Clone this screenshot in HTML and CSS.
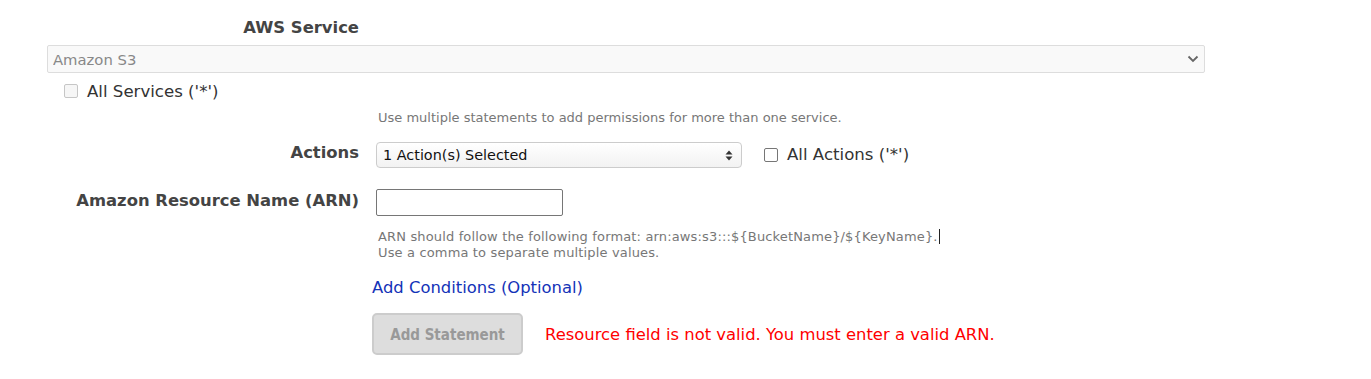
FILE: index.html
```html
<!DOCTYPE html>
<html lang="en">
    <head>
        <title>Policy Generator</title>
        <link rel="stylesheet" href="styles.css">
    </head>
    <body>
        <div id="statementForm">
            <div class="serviceLabel">AWS Service</div>

            <div class="selectWrap">
                <select class="serviceSelect" disabled>
                    <option>Amazon S3</option>
                </select>
                <svg class="chevron" width="12" height="8" viewBox="0 0 12 8">
                    <path d="M1.5 1.5 L6 6 L10.5 1.5" fill="none" stroke="#666" stroke-width="1.8"/>
                </svg>
            </div>

            <div class="allServices">
                <input type="checkbox" class="box boxDisabled" id="allServicesBox" disabled>
                <label for="allServicesBox">All Services ('*')</label>
            </div>

            <p class="hint hintService">Use multiple statements to add permissions for more than one service.</p>

            <div class="formRow rowActions">
                <div class="rowLabel">Actions</div>
                <div class="rowControl">
                    <div class="selectWrap actionsWrap">
                        <select class="actionsSelect">
                            <option>1 Action(s) Selected</option>
                        </select>
                        <svg class="updown" width="8" height="11" viewBox="0 0 8 11">
                            <path d="M4 0.5 L7.5 4.5 L0.5 4.5 Z" fill="#333"/>
                            <path d="M4 10.5 L7.5 6.5 L0.5 6.5 Z" fill="#333"/>
                        </svg>
                    </div>
                    <input type="checkbox" class="box" id="allActionsBox">
                    <label for="allActionsBox" class="boxLabel">All Actions ('*')</label>
                </div>
            </div>

            <div class="formRow rowArn">
                <div class="rowLabel">Amazon Resource Name (ARN)</div>
                <div class="rowControl">
                    <input type="text" class="arnInput">
                </div>
            </div>

            <p class="hint hintArn">
                ARN should follow the following format: arn:aws:s3:::${BucketName}/${KeyName}.<span class="caret"></span><br>
                Use a comma to separate multiple values.
            </p>

            <a href="#" class="conditionsLink">Add Conditions (Optional)</a>

            <div class="submitRow">
                <button class="addButton" disabled>Add Statement</button>
                <span class="errorText">Resource field is not valid. You must enter a valid ARN.</span>
            </div>
        </div>
    </body>
</html>
```

FILE: styles.css
```css
body{
    margin: 0;
    background-color: #fff;
    font-family: "DejaVu Sans", Verdana, sans-serif;
    color: #333;
}

#statementForm{
    width: 1158px;
    margin-left: 47px;
    padding-top: 17px;
}

.serviceLabel,
.rowLabel{
    font-weight: bold;
    font-size: 16.4px;
    color: #444;
    text-align: right;
}

.serviceLabel{
    width: 312px;
    height: 22px;
    line-height: 22px;
}

.selectWrap{
    position: relative;
}

.serviceSelect{
    display: block;
    width: 100%;
    height: 28px;
    margin-top: 6px;
    padding: 0 5px;
    -webkit-appearance: none;
    appearance: none;
    background-color: #f9f9f9;
    border: 1px solid #ddd;
    border-radius: 2px;
    color: #888;
    opacity: 1;
    font-family: "DejaVu Sans", sans-serif;
    font-size: 14.8px;
}

.chevron{
    position: absolute;
    right: 6px;
    top: 10px;
}

.allServices{
    display: flex;
    align-items: center;
    height: 20px;
    margin-top: 8px;
    padding-left: 17px;
    font-size: 16.6px;
    color: #333;
}

.box{
    -webkit-appearance: none;
    appearance: none;
    width: 14px;
    height: 14px;
    margin: 0 9px 0 0;
    border: 1px solid #767676;
    border-radius: 2px;
    background-color: #fff;
}

.boxDisabled{
    border-color: #c6c6c6;
    background-color: #f6f6f6;
}

.hint{
    margin: 0 0 0 331px;
    font-size: 13px;
    line-height: 16px;
    color: #777;
}

.hintService{
    margin-top: 9px;
}

.formRow{
    display: flex;
    align-items: center;
}

.rowLabel{
    width: 312px;
    flex-shrink: 0;
}

.rowControl{
    display: flex;
    align-items: center;
    margin-left: 17px;
}

.rowActions{
    margin-top: 16px;
}

.rowActions .rowLabel{
    margin-top: -5px;
}

.actionsWrap{
    width: 366px;
    margin-right: 22px;
}

.actionsSelect{
    display: block;
    width: 100%;
    height: 26px;
    padding: 0 6px;
    -webkit-appearance: none;
    appearance: none;
    background: linear-gradient(#fff, #f2f2f2);
    border: 1px solid #ccc;
    border-radius: 4px;
    color: #111;
    font-family: "DejaVu Sans", sans-serif;
    font-size: 14.4px;
}

.updown{
    position: absolute;
    right: 9px;
    top: 8px;
}

.boxLabel{
    font-size: 16.6px;
    color: #333;
    margin-top: -2px;
}

.rowArn{
    margin-top: 21px;
}

.rowArn .rowLabel{
    margin-top: -4px;
}

.arnInput{
    width: 187px;
    height: 27px;
    box-sizing: border-box;
    border: 1px solid #767676;
    border-radius: 2px;
    padding: 0 4px;
}

.hintArn{
    margin-top: 13px;
    letter-spacing: 0.15px;
}

.caret{
    display: inline-block;
    width: 1px;
    height: 15px;
    margin-left: 1px;
    vertical-align: -3px;
    background-color: #222;
}

.conditionsLink{
    display: inline-block;
    margin: 17px 0 0 325px;
    font-size: 16.4px;
    color: #1433b8;
    text-decoration: none;
}

.submitRow{
    display: flex;
    align-items: center;
    margin: 16px 0 0 325px;
}

.addButton{
    width: 151px;
    height: 42px;
    padding-top: 3px;
    background-color: #ddd;
    border: 2px solid #ccc;
    border-radius: 5px;
    color: #999;
    font-family: "DejaVu Sans Condensed", "DejaVu Sans", sans-serif;
    font-weight: bold;
    font-size: 15px;
}

.errorText{
    margin-left: 22px;
    font-size: 16.4px;
    color: #f00;
}
```
